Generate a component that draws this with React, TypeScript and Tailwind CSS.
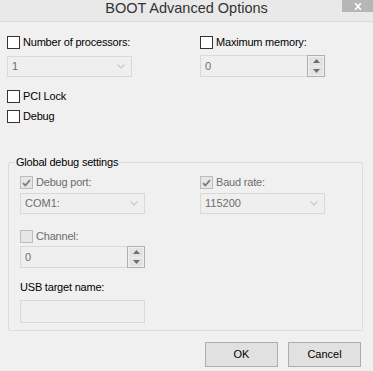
import type { ReactNode } from "react";

const FONT = { fontFamily: '"Liberation Sans", Arial, sans-serif' };

function CheckBox({ label, checked = false, disabled = false }: { label: string; checked?: boolean; disabled?: boolean }) {
  return (
    <div className="flex items-center h-[13px] gap-[3px]">
      <div
        className={
          "w-[13px] h-[13px] border flex items-center justify-center " +
          (disabled ? "border-[#bcbcbc] bg-[#e6e6e6]" : "border-[#333333] bg-white")
        }
      >
        {checked && (
          <svg width="9" height="8" viewBox="0 0 9 8">
            <path d="M1 4.2 L3.3 6.5 L8 1.2" fill="none" stroke="#7c7c7c" strokeWidth="1.8" />
          </svg>
        )}
      </div>
      <span className={"text-[11px] leading-none tracking-[-0.2px] " + (disabled ? "text-[#6d6d6d]" : "text-black")}>
        {label}
      </span>
    </div>
  );
}

function Combo({ value }: { value: string }) {
  return (
    <div className="w-[125px] h-[21px] border border-[#d9d9d9] bg-[#efefef] flex items-center justify-between pl-[4px] pr-[6px]">
      <span className="text-[11px] text-[#6d6d6d]">{value}</span>
      <svg width="8" height="5" viewBox="0 0 8 5">
        <path d="M0.5 0.5 L4 4 L7.5 0.5" fill="none" stroke="#c8c8c8" strokeWidth="1.2" />
      </svg>
    </div>
  );
}

function SpinBox({ value }: { value: string }) {
  return (
    <div className="w-[125px] h-[22px] flex">
      <div className="flex-1 border border-r-0 border-[#d9d9d9] bg-[#efefef] flex items-center pl-[4px]">
        <span className="text-[11px] text-[#6d6d6d]">{value}</span>
      </div>
      <div className="w-[18px] border border-[#b0b0b0] flex flex-col gap-[1px] p-[1px] bg-[#f0f0f0]">
        <div className="flex-1 bg-[#e3e3e3] flex items-center justify-center">
          <svg width="7" height="4" viewBox="0 0 7 4">
            <path d="M0 4 L3.5 0 L7 4 Z" fill="#707070" />
          </svg>
        </div>
        <div className="flex-1 bg-[#e3e3e3] flex items-center justify-center">
          <svg width="7" height="4" viewBox="0 0 7 4">
            <path d="M0 0 L3.5 4 L7 0 Z" fill="#707070" />
          </svg>
        </div>
      </div>
    </div>
  );
}

function Button({ children }: { children: ReactNode }) {
  return (
    <button className="w-[73px] h-[25px] border border-[#adadad] bg-[#e1e1e1] text-[11px] text-black">
      {children}
    </button>
  );
}

export default function App() {
  return (
    <div style={FONT} className="w-[374px] h-[371px] bg-[#f0f0f0] border-r border-[#d4d4d4] relative overflow-hidden flex flex-col">
      <div className="h-[22px] bg-[#e9e9e9] border-b border-[#dadada] flex items-start justify-center">
        <span className="text-[14.5px] leading-none mt-[1px] text-[#333333]">BOOT Advanced Options</span>
      </div>
      <div className="absolute top-0 right-0 w-[31px] h-[12px] bg-[#b6b6b6] flex items-center justify-center">
        <svg width="8" height="7" viewBox="0 0 8 7">
          <path d="M1 0 L7 7 M7 0 L1 7" stroke="white" strokeWidth="1.6" />
        </svg>
      </div>

      <div className="pl-[7px] pt-[14px] grid grid-cols-[193px_1fr]">
        <div className="flex flex-col">
          <CheckBox label="Number of processors:" />
          <div className="mt-[7px]">
            <Combo value="1" />
          </div>
        </div>
        <div className="flex flex-col">
          <CheckBox label="Maximum memory:" />
          <div className="mt-[6px]">
            <SpinBox value="0" />
          </div>
        </div>
      </div>

      <div className="pl-[7px] mt-[13px] flex flex-col gap-[7px]">
        <CheckBox label="PCI Lock" />
        <CheckBox label="Debug" />
      </div>

      <div className="ml-[8px] mt-[39px] w-[355px] h-[169px] border border-[#dcdcdc] rounded-[2px] relative">
        <span className="absolute left-[6px] -top-[8px] px-[1px] bg-[#f0f0f0] text-[11px] leading-[14px] tracking-[-0.2px] text-black">
          Global debug settings
        </span>
        <div className="pl-[11px] pt-[13px] grid grid-cols-[180px_1fr]">
          <div className="flex flex-col">
            <CheckBox label="Debug port:" checked disabled />
            <div className="mt-[4px]">
              <Combo value="COM1:" />
            </div>
          </div>
          <div className="flex flex-col">
            <CheckBox label="Baud rate:" checked disabled />
            <div className="mt-[4px]">
              <Combo value="115200" />
            </div>
          </div>
        </div>
        <div className="pl-[11px] mt-[16px] flex flex-col">
          <CheckBox label="Channel:" disabled />
          <div className="mt-[3px]">
            <SpinBox value="0" />
          </div>
          <span className="mt-[14px] text-[11px] leading-none tracking-[-0.2px] text-black">USB target name:</span>
          <div className="mt-[7px] w-[125px] h-[23px] border border-[#d9d9d9] bg-[#efefef]" />
        </div>
      </div>

      <div className="mt-[11px] flex justify-end gap-[10px] pr-[12px]">
        <Button>OK</Button>
        <Button>Cancel</Button>
      </div>
    </div>
  );
}
